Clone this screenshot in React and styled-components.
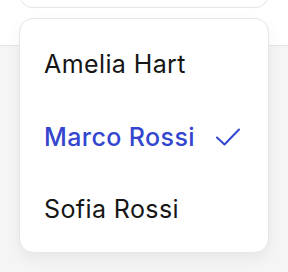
import React from "react";
import styled, { createGlobalStyle } from "styled-components";

const Global = createGlobalStyle`
    html, body {
        margin: 0;
        padding: 0;
        background: #ffffff;
        font-family: Inter, "Noto Sans", sans-serif;
    }
`;

const Page = styled.div`
    width: 288px;
    height: 272px;
    position: relative;
    overflow: hidden;
    display: flex;
    flex-direction: column;
`;

const Header = styled.div`
    height: 46px;
    padding: 0 20px;
    background: #ffffff;
    border-bottom: 1px solid #e6e6e6;
    box-sizing: border-box;
`;

const Trigger = styled.div`
    margin-top: -40px;
    height: 48px;
    border: 1px solid #e6e6e6;
    border-radius: 12px;
    background: #ffffff;
    box-sizing: border-box;
`;

const Body = styled.div`
    flex: 1;
    background: #f5f5f5;
`;

const Menu = styled.ul`
    position: absolute;
    top: 18px;
    left: 19px;
    width: 250px;
    margin: 0;
    padding: 9px 0 6px;
    list-style: none;
    background: #ffffff;
    border: 1px solid #e6e6e6;
    border-radius: 14px;
    box-sizing: border-box;
    box-shadow: 0 6px 16px rgba(0, 0, 0, 0.06);
`;

const Option = styled.li`
    height: 72.5px;
    padding: 0 24px;
    display: flex;
    align-items: center;
    gap: 20px;
    font-size: 25px;
    letter-spacing: 0.4px;
    font-weight: ${(p) => (p.selected ? 500 : 400)};
    color: ${(p) => (p.selected ? "#3446cf" : "#161616")};
`;

const Check = () => (
    <svg width="26" height="20" viewBox="0 0 26 20" fill="none">
        <path
            d="M2 10.5 L9.5 17.5 L24 2.5"
            stroke="#3446cf"
            strokeWidth="2"
            strokeLinecap="round"
            strokeLinejoin="round"
        />
    </svg>
);

const people = [
    { name: "Amelia Hart" },
    { name: "Marco Rossi", selected: true },
    { name: "Sofia Rossi" },
];

const App = () => {
    return (
        <Page>
            <Global />
            <Header>
                <Trigger />
            </Header>
            <Body />
            <Menu>
                {people.map((person) => (
                    <Option key={person.name} selected={person.selected}>
                        {person.name}
                        {person.selected && <Check />}
                    </Option>
                ))}
            </Menu>
        </Page>
    );
};

export default App;
